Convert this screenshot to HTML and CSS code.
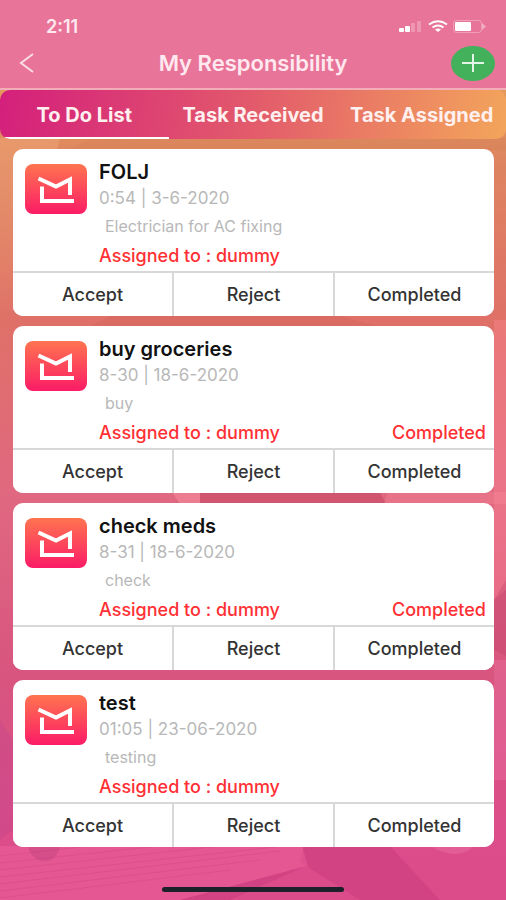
FILE: index.html
```html
<!DOCTYPE html>
<html lang="en">
<head>
<meta charset="utf-8">
<meta name="viewport" content="width=device-width, initial-scale=1">
<title>My Responsibility</title>
<link rel="stylesheet" href="styles.css">
</head>
<body>
<svg class="defs" width="0" height="0" aria-hidden="true">
  <defs>
    <linearGradient id="logo-fill" x1="0" y1="0" x2="0" y2="1">
      <stop offset="0" stop-color="#ff7450"/>
      <stop offset="1" stop-color="#fb1c66"/>
    </linearGradient>
  </defs>
  <symbol id="logo" viewBox="0 0 62 50">
    <rect width="62" height="50" rx="8" fill="url(#logo-fill)"/>
    <path d="M13.5 14.5 31 22.5 45 15.5V31M17 22.500V37H49" fill="none" stroke="#fff" stroke-width="4"/>
  </symbol>
</svg>
<div class="app">
  <svg class="backdrop" viewBox="0 0 506 900" preserveAspectRatio="none" aria-hidden="true">
    <defs>
      <linearGradient id="warm" x1="0" y1="0" x2="0" y2="1">
        <stop offset="0" stop-color="#f0a878" stop-opacity=".5"/>
        <stop offset="1" stop-color="#f0a878" stop-opacity="0"/>
      </linearGradient>
    </defs>
    <path d="M0 138H60L13 320H0Z" fill="url(#warm)"/>
    <path d="M90 138H506V150H70Z" fill="#c87850" opacity=".2"/>
    <path d="M110 316H340L380 327H90Z" fill="#c85a50" opacity=".25"/>
    <path d="M172 492H200V504H180Z" fill="#f58a9c" opacity=".6"/>
    <path d="M200 492H380L386 504H200Z" fill="#b83c55" opacity=".4"/>
    <path d="M388 492H506V504H384Z" fill="#f58a9c" opacity=".35"/>
    <path d="M494 320H506V590L494 600Z" fill="#ff8a98" opacity=".35"/>
    <path d="M494 600 506 580V656L494 650Z" fill="#b83c68" opacity=".3"/>
    <path d="M494 660H506V780H494Z" fill="#f07aac" opacity=".3"/>
    <path d="M0 720 13 740V830L0 840Z" fill="#b03a90" opacity=".2"/>
    <path d="M304 846H390L440 900H360L300 862Z" fill="#b83070" opacity=".3"/>
    <path d="M430 846H474Q458 862 430 846Z" fill="#f07aac" opacity=".35"/>
    <path d="M0 846H302L308 866 180 900H0Z" fill="#f56ca4" opacity=".35"/>
    <path d="M306 866 180 900H230Z" fill="#b83070" opacity=".3"/>
    <path d="M28 846H60Q56 863 42 861 30 858 28 846Z" fill="#b83c78" opacity=".35"/>
    <path d="M0 856 90 846M0 863 160 846M0 870 220 846M0 877 275 847M0 884 280 851M0 891 260 860M0 898 230 870" fill="none" stroke="#c03c80" opacity=".25"/>
  </svg>

  <header class="header">
    <div class="status">
      <span class="time">2:11</span>
      <svg width="88" height="14" viewBox="0 0 88 14" aria-hidden="true">
        <g fill="#fff">
          <rect x="1" y="9" width="5" height="4" rx="1"/>
          <rect x="7" y="7" width="5" height="6" rx="1"/>
          <rect x="13" y="4" width="4" height="9" rx="1" opacity=".25"/>
          <rect x="19" y="2" width="4" height="11" rx="1" opacity=".25"/>
          <rect x="57" y="3" width="16" height="9" rx="1"/>
          <path d="M84 4 88 7.500 84 11Z" opacity=".4"/>
        </g>
        <rect x="55.500" y="1.500" width="28" height="12" rx="3" fill="none" stroke="#fff" opacity=".3"/>
        <g fill="none" stroke="#fff" stroke-width="2">
          <path d="M31 5.500Q40 -1 49 5.500"/>
          <path d="M34.500 8.500Q40 4.500 45.500 8.500"/>
        </g>
        <path d="M37 10.500Q40 8.500 43 10.500L40 13Z" fill="#fff"/>
      </svg>
    </div>
    <div class="titlebar">
      <button class="back" type="button" aria-label="Back">
        <svg width="16" height="20" viewBox="0 0 16 20" aria-hidden="true"><path d="M14 1 2 10 14 19" fill="none" stroke="#fbdde6" stroke-width="2"/></svg>
      </button>
      <h1 class="title">My Responsibility</h1>
      <button class="add" type="button" aria-label="Add">
        <svg width="24" height="20" viewBox="0 0 24 20" aria-hidden="true"><path d="M12 1V19M1 10H23" fill="none" stroke="#e3f5e7" stroke-width="2"/></svg>
      </button>
    </div>
  </header>

  <nav class="tabs">
    <button class="tab tab-active" type="button">To Do List</button>
    <button class="tab" type="button">Task Received</button>
    <button class="tab" type="button">Task Assigned</button>
  </nav>

  <main class="list">
    <article class="card">
      <div class="body">
        <svg class="logo" viewBox="0 0 62 50" aria-hidden="true"><use href="#logo"/></svg>
        <div class="info">
          <h2 class="name">FOLJ</h2>
          <p class="date">0:54 | 3-6-2020</p>
          <p class="note">Electrician for AC fixing</p>
          <p class="assigned"><span>Assigned to : dummy</span></p>
        </div>
      </div>
      <div class="actions"><button type="button">Accept</button><button type="button">Reject</button><button type="button">Completed</button></div>
    </article>
    <article class="card">
      <div class="body">
        <svg class="logo" viewBox="0 0 62 50" aria-hidden="true"><use href="#logo"/></svg>
        <div class="info">
          <h2 class="name">buy groceries</h2>
          <p class="date">8-30 | 18-6-2020</p>
          <p class="note">buy</p>
          <p class="assigned"><span>Assigned to : dummy</span><span>Completed</span></p>
        </div>
      </div>
      <div class="actions"><button type="button">Accept</button><button type="button">Reject</button><button type="button">Completed</button></div>
    </article>
    <article class="card">
      <div class="body">
        <svg class="logo" viewBox="0 0 62 50" aria-hidden="true"><use href="#logo"/></svg>
        <div class="info">
          <h2 class="name">check meds</h2>
          <p class="date">8-31 | 18-6-2020</p>
          <p class="note">check</p>
          <p class="assigned"><span>Assigned to : dummy</span><span>Completed</span></p>
        </div>
      </div>
      <div class="actions"><button type="button">Accept</button><button type="button">Reject</button><button type="button">Completed</button></div>
    </article>
    <article class="card">
      <div class="body">
        <svg class="logo" viewBox="0 0 62 50" aria-hidden="true"><use href="#logo"/></svg>
        <div class="info">
          <h2 class="name">test</h2>
          <p class="date">01:05 | 23-06-2020</p>
          <p class="note">testing</p>
          <p class="assigned"><span>Assigned to : dummy</span></p>
        </div>
      </div>
      <div class="actions"><button type="button">Accept</button><button type="button">Reject</button><button type="button">Completed</button></div>
    </article>
  </main>
  <div class="home-indicator"></div>
</div>
</body>
</html>
```
FILE: styles.css
```css
* {
  box-sizing: border-box;
}

body {
  margin: 0;
  font-family: Inter, Roboto, sans-serif;
}

h1, h2, p {
  margin: 0;
}

button {
  border: 0;
  padding: 0;
  background: none;
  font-family: inherit;
}

.defs {
  position: absolute;
}

.app {
  position: relative;
  isolation: isolate;
  min-height: 100vh;
  display: flex;
  flex-direction: column;
  background: linear-gradient(#e59a5c 10%, #de8460 18%, #df7068 36%, #e06880 55%, #d8557f 75%, #dc4c8b 95%);
}

.backdrop {
  position: absolute;
  inset: 0;
  z-index: -1;
  width: 100%;
  height: 100%;
}

.header {
  padding-top: 16px;
  background: #e87599;
  border-bottom: 2px solid #f3adb8;
  color: #ffe8ef;
}

.status {
  display: flex;
  justify-content: space-between;
  align-items: center;
  height: 20px;
  padding: 0 20px 0 46px;
}

.time {
  font-size: 18px;
  font-weight: 600;
}

.titlebar {
  display: grid;
  grid-template-columns: 44px 1fr 44px;
  align-items: center;
  height: 52px;
  padding: 2px 11px 0;
}

.back {
  display: flex;
  padding: 8px;
}

.title {
  text-align: center;
  font-size: 22px;
  font-weight: 600;
}

.add {
  display: flex;
  align-items: center;
  justify-content: center;
  height: 35px;
  border-radius: 50%;
  background: #43b05c;
}

.tabs {
  display: grid;
  grid-template-columns: repeat(3, 1fr);
  height: 49px;
  border-radius: 10px;
  overflow: hidden;
  background: linear-gradient(100deg, #d41f7c, #e2586c 48%, #f3a55b);
}

.tab {
  padding-top: 2px;
  border-bottom: 2px solid transparent;
  color: #fff0f0;
  font-size: 20px;
  font-weight: 700;
  white-space: nowrap;
}

.tab-active {
  border-bottom-color: #fff;
}

.list {
  display: flex;
  flex-direction: column;
  gap: 10px;
  padding: 10px 12px 0 13px;
}

.card {
  border-radius: 10px;
  overflow: hidden;
  background: #fff;
}

.body {
  display: flex;
  gap: 12px;
  padding: 11px 8px 1px 12px;
}

.logo {
  flex: none;
  width: 62px;
  height: 50px;
  margin-top: 4px;
}

.info {
  flex: 1;
}

.name {
  font-size: 20px;
  font-weight: 600;
  line-height: 24px;
  color: #111;
}

.date {
  font-size: 17px;
  line-height: 28px;
  color: #b8b8b8;
}

.note {
  padding-left: 6px;
  font-size: 16px;
  line-height: 28px;
  color: #b8b8b8;
}

.assigned {
  display: flex;
  justify-content: space-between;
  padding-top: 2px;
  font-size: 18px;
  font-weight: 500;
  line-height: 28px;
  color: #ff3034;
}

.actions {
  display: grid;
  grid-template-columns: repeat(3, 1fr);
  gap: 2px;
  height: 45px;
  border-top: 2px solid #d8d8d8;
  background: #d8d8d8;
}

.actions button {
  background: #fff;
  padding-bottom: 1px;
  font-size: 18px;
  font-weight: 500;
  color: #333;
}

.home-indicator {
  width: 36%;
  height: 5px;
  margin: auto auto 8px;
  border-radius: 3px;
  background: #1c2028;
}
```
